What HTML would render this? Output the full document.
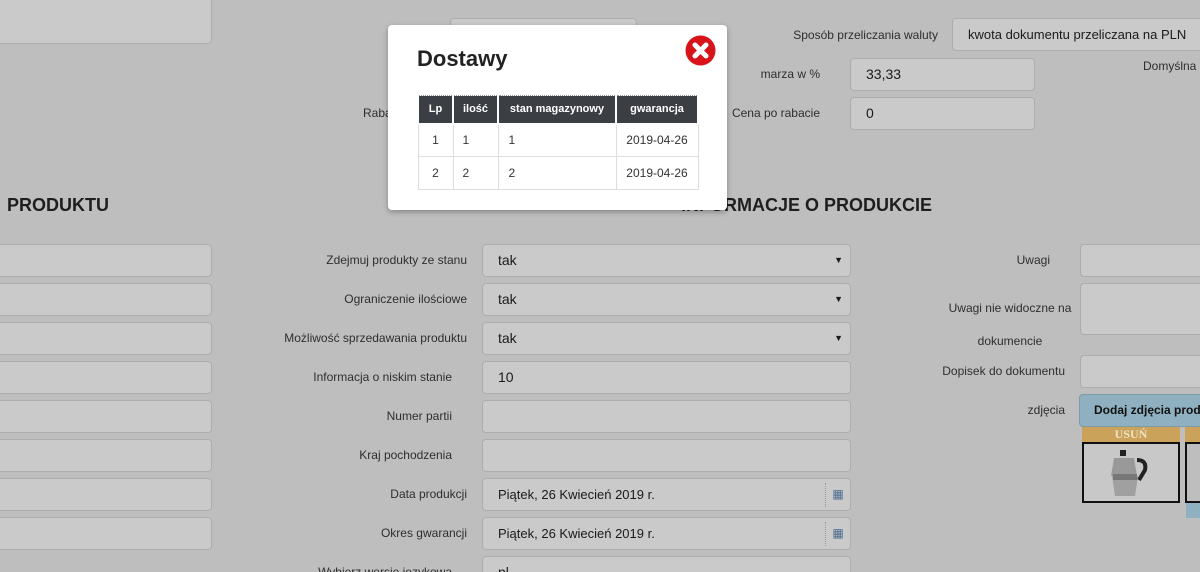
<!DOCTYPE html>
<html><head><meta charset="utf-8"><style>
html,body{margin:0;width:1200px;height:572px;overflow:hidden}
body{background:#bebebe;font-family:"Liberation Sans",sans-serif;color:#2a2a2a;position:relative}
.i{position:absolute;background:#cacaca;border:1px solid #adadad;border-radius:4px;box-sizing:border-box;height:33px;font-size:14px;line-height:31px;padding-left:15px;color:#1a1a1a;white-space:nowrap;overflow:hidden}
.l{position:absolute;font-size:12px;text-align:right;color:#2e2e2e;white-space:nowrap}
.h{position:absolute;font-weight:bold;font-size:18px;color:#1e1e1e}
.ar{position:absolute;right:7px;top:0;font-size:9px}
.cal{position:absolute;right:0;top:4px;width:24px;height:24px;border-left:1px dotted #999;font-size:12px;text-align:center;line-height:22px;color:#4a6a90}
td{white-space:nowrap;padding:0}
</style></head><body>
<div class="i" style="left:-10px;top:-5px;width:222px;height:49px"></div>
<div class="i" style="left:450px;top:18px;width:187px"></div>
<div class="l" style="left:760px;top:28px;width:178px">Sposób przeliczania waluty</div>
<div class="i" style="left:952px;top:18px;width:260px;font-size:13px">kwota dokumentu przeliczana na PLN</div>
<div class="l" style="left:700px;top:67px;width:120px">marza w %</div>
<div class="i" style="left:850px;top:58px;width:185px">33,33</div>
<div class="l" style="left:1143px;top:59px;text-align:left">Domyślna</div>
<div class="l" style="left:363px;top:106px;text-align:left">Raba</div>
<div class="l" style="left:700px;top:106px;width:120px">Cena po rabacie</div>
<div class="i" style="left:850px;top:97px;width:185px">0</div>
<div class="h" style="left:7px;top:195px">PRODUKTU</div>
<div class="h" style="left:681px;top:195px">INFORMACJE O PRODUKCIE</div>

<div class="i" style="left:-10px;top:244px;width:222px"></div>
<div class="i" style="left:-10px;top:283px;width:222px"></div>
<div class="i" style="left:-10px;top:322px;width:222px"></div>
<div class="i" style="left:-10px;top:361px;width:222px"></div>
<div class="i" style="left:-10px;top:400px;width:222px"></div>
<div class="i" style="left:-10px;top:439px;width:222px"></div>
<div class="i" style="left:-10px;top:478px;width:222px"></div>
<div class="i" style="left:-10px;top:517px;width:222px"></div>

<div class="l" style="left:200px;top:253px;width:267px">Zdejmuj produkty ze stanu</div>
<div class="i" style="left:482px;top:244px;width:369px">tak<span class="ar">▼</span></div>
<div class="l" style="left:200px;top:292px;width:267px">Ograniczenie ilościowe</div>
<div class="i" style="left:482px;top:283px;width:369px">tak<span class="ar">▼</span></div>
<div class="l" style="left:200px;top:331px;width:267px">Możliwość sprzedawania produktu</div>
<div class="i" style="left:482px;top:322px;width:369px">tak<span class="ar">▼</span></div>
<div class="l" style="left:200px;top:370px;width:252px">Informacja o niskim stanie</div>
<div class="i" style="left:482px;top:361px;width:369px">10</div>
<div class="l" style="left:200px;top:409px;width:252px">Numer partii</div>
<div class="i" style="left:482px;top:400px;width:369px"></div>
<div class="l" style="left:200px;top:448px;width:252px">Kraj pochodzenia</div>
<div class="i" style="left:482px;top:439px;width:369px"></div>
<div class="l" style="left:200px;top:487px;width:267px">Data produkcji</div>
<div class="i" style="left:482px;top:478px;width:369px;font-size:13px">Piątek, 26 Kwiecień 2019 r.<span class="cal">▦</span></div>
<div class="l" style="left:200px;top:526px;width:267px">Okres gwarancji</div>
<div class="i" style="left:482px;top:517px;width:369px;font-size:13px">Piątek, 26 Kwiecień 2019 r.<span class="cal">▦</span></div>
<div class="l" style="left:200px;top:565px;width:252px">Wybierz wersje językową</div>
<div class="i" style="left:482px;top:556px;width:369px">pl</div>

<div class="l" style="left:900px;top:253px;width:150px">Uwagi</div>
<div class="i" style="left:1080px;top:244px;width:140px"></div>
<div class="l" style="left:930px;top:292px;width:160px;text-align:center;line-height:33px;left:930px;width:160px">Uwagi nie widoczne na<br>dokumencie</div>
<div class="i" style="left:1080px;top:283px;width:140px;height:52px"></div>
<div class="l" style="left:900px;top:364px;width:165px">Dopisek do dokumentu</div>
<div class="i" style="left:1080px;top:355px;width:140px"></div>
<div class="l" style="left:900px;top:403px;width:165px">zdjęcia</div>
<div class="i" style="left:1079px;top:394px;width:140px;background:#8fb0c0;border-color:#7d9aa8;font-weight:bold;font-size:12px;padding-left:14px;color:#111">Dodaj zdjęcia produktu</div>
<div style="position:absolute;left:1082px;top:427px;width:98px;height:15px;background:#caa25a;color:#eee3c8;font:bold 12px 'Liberation Serif',serif;text-align:center;line-height:15px">USUŃ</div>
<div style="position:absolute;left:1082px;top:442px;width:98px;height:61px;border:2px solid #111;box-sizing:border-box;background:#c8c8c8">
<svg width="94" height="57" viewBox="0 0 94 57"><rect x="36" y="6" width="6" height="6" fill="#222"/><path d="M30 14h20l3 18h-26z" fill="#999"/><path d="M28 32h26l-3 20h-20z" fill="#a0a0a0"/><rect x="29" y="30" width="24" height="6" fill="#777"/><path d="M53 16q10 0 8 10l-6 10" stroke="#222" stroke-width="4" fill="none"/></svg></div>
<div style="position:absolute;left:1185px;top:427px;width:20px;height:15px;background:#caa25a"></div>
<div style="position:absolute;left:1185px;top:442px;width:20px;height:61px;border:2px solid #111;box-sizing:border-box"></div>
<div style="position:absolute;left:1186px;top:503px;width:20px;height:15px;background:#8fb0c0"></div>

<div style="position:absolute;left:388px;top:25px;width:339px;height:185px;background:#fff;border-radius:4px;box-shadow:0 2px 6px rgba(0,0,0,.3)">
<div style="position:absolute;left:29px;top:21px;font-size:22px;font-weight:bold;color:#222">Dostawy</div>
<svg style="position:absolute;left:297px;top:10px" width="31" height="31" viewBox="0 0 31 31"><circle cx="15.5" cy="15.5" r="15" fill="#d7141a"/><path d="M10 10l11 11M21 10l-11 11" stroke="#fff" stroke-width="5" stroke-linecap="round"/></svg>
<table style="position:absolute;left:29px;top:70px;width:280px;table-layout:fixed;border-collapse:collapse;font-size:12px;border-bottom:1px dotted #555;border-top:1px dotted #999">
<colgroup><col style="width:35px"><col style="width:45px"><col style="width:118px"><col style="width:82px"></colgroup>
<tr style="background:#3b3e43;color:#fff;font-weight:bold;height:28px;font-size:11px"><td style="text-align:center;border:2px solid #fff;border-top:0">Lp</td><td style="text-align:center;border:2px solid #fff;border-top:0">ilość</td><td style="text-align:center;border:2px solid #fff;border-top:0">stan magazynowy</td><td style="text-align:center;border:2px solid #fff;border-top:0">gwarancja</td></tr>
<tr style="height:33px;color:#333"><td style="text-align:center;border:1px solid #ddd">1</td><td style="padding-left:9px;border:1px solid #ddd">1</td><td style="padding-left:10px;border:1px solid #ddd">1</td><td style="text-align:center;border:1px solid #ddd">2019-04-26</td></tr>
<tr style="height:33px;color:#333"><td style="text-align:center;border:1px solid #ddd">2</td><td style="padding-left:9px;border:1px solid #ddd">2</td><td style="padding-left:10px;border:1px solid #ddd">2</td><td style="text-align:center;border:1px solid #ddd">2019-04-26</td></tr>
</table></div>
</body></html>
